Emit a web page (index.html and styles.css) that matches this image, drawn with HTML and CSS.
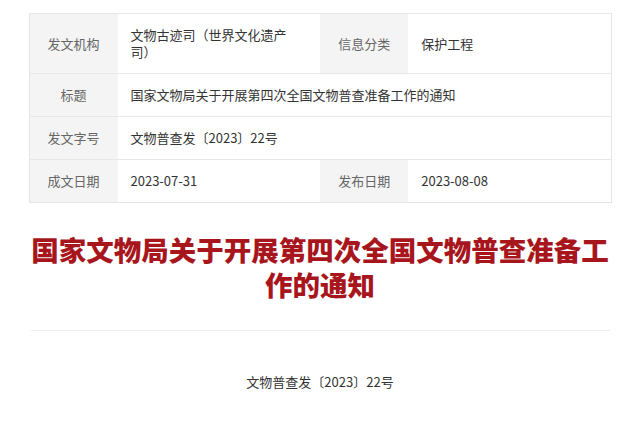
FILE: index.html
```html
<!DOCTYPE html>
<html lang="zh-CN">
<head>
    <meta charset="UTF-8">
    <meta name="viewport" content="width=device-width, initial-scale=1.0">
    <title>国家文物局关于开展第四次全国文物普查准备工作的通知</title>
    <link rel="stylesheet" href="styles.css">
</head>
<body>
    <div class="page">
        <table class="info-table">
            <tr>
                <th>发文机构</th>
                <td class="wrap">文物古迹司（世界文化遗产司）</td>
                <th>信息分类</th>
                <td>保护工程</td>
            </tr>
            <tr>
                <th>标题</th>
                <td colspan="3">国家文物局关于开展第四次全国文物普查准备工作的通知</td>
            </tr>
            <tr>
                <th>发文字号</th>
                <td colspan="3">文物普查发〔2023〕22号</td>
            </tr>
            <tr>
                <th>成文日期</th>
                <td>2023-07-31</td>
                <th>发布日期</th>
                <td>2023-08-08</td>
            </tr>
        </table>

        <h1 class="doc-title">国家文物局关于开展第四次全国文物普查准备工作的通知</h1>

        <p class="doc-number">文物普查发〔2023〕22号</p>
    </div>
</body>
</html>
```

FILE: styles.css
```css
body {
    margin: 0;
    background: #fff;
    font-family: "Noto Sans CJK SC", "Microsoft YaHei", sans-serif;
    color: #333;
}

.page {
    width: 583px;
    margin: 13px auto 0;
}

.info-table {
    width: 583px;
    border-collapse: collapse;
    table-layout: fixed;
    border: 1px solid #e4e4e4;
    font-size: 13px;
    line-height: 17px;
}

.info-table th,
.info-table td {
    border-top: 1px solid #e8e8e8;
    padding: 12px 13px 13px;
    vertical-align: middle;
}

.info-table th {
    width: 62px;
    background: #f4f4f4;
    font-weight: normal;
    color: #666;
    text-align: center;
}

.info-table td {
    background: #fff;
    color: #333;
    text-align: left;
}

.info-table td.wrap {
    padding-right: 30px;
}

.doc-title {
    margin: 29px 2px 0;
    padding-bottom: 28px;
    border-bottom: 1px solid #ececec;
    font-size: 27.5px;
    line-height: 35px;
    font-weight: 900;
    color: #a8161d;
    text-align: center;
}

.doc-number {
    margin: 42px 0 0;
    font-size: 13px;
    line-height: 17px;
    color: #333;
    text-align: center;
}
```
